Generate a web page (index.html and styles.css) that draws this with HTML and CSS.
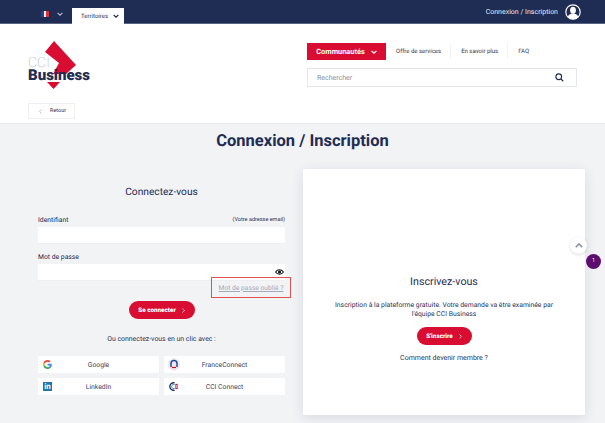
FILE: index.html
```html
<!DOCTYPE html>
<html lang="fr">
<head>
  <meta charset="UTF-8" />
  <meta name="viewport" content="width=device-width, initial-scale=1.0"/>
  <title>Connexion / Inscription</title>
  <link rel="stylesheet" href="styles.css">
</head>
<body>

  <div class="topbar">
    <div class="topbar-left">
      <span class="flag"><i class="flag-blue"></i><i class="flag-white"></i><i class="flag-red"></i></span>
      <svg class="chev chev-lang" viewBox="0 0 10 6"><path d="M1 1l4 4 4-4"/></svg>
      <div class="tab">Territoires
        <svg class="chev" viewBox="0 0 10 6"><path d="M1 1l4 4 4-4"/></svg>
      </div>
    </div>
    <div class="topbar-right">
      <span>Connexion / Inscription</span>
      <svg class="user-icon" viewBox="0 0 16 16">
        <circle cx="8" cy="8" r="7.2" fill="#1f2c53" stroke="#fff" stroke-width="1.2"/>
        <ellipse cx="8" cy="6.2" rx="2.9" ry="3.5" fill="#fff"/>
        <path d="M2.8 13c.5-2.3 2.5-2.7 3.8-3.4h2.8c1.3.7 3.3 1.1 3.8 3.4A7 7 0 0 1 8 15.2 7 7 0 0 1 2.8 13z" fill="#fff"/>
      </svg>
    </div>
  </div>

  <header>
    <div class="header-top">
      <div class="logo">
        <svg class="logo-mark" viewBox="0 0 62 48">
          <path d="M26 0L48 24 38 33H25L31 22 17 11z" fill="#d90d32"/>
          <path d="M19 41H32L25.500 48z" fill="#d90d32"/>
        </svg>
        <span class="logo-cci">CCI</span>
        <span class="logo-business">Business</span>
      </div>
      <div class="header-right">
        <nav class="nav">
          <a class="nav-main">Communautés
            <svg class="chev" viewBox="0 0 10 6"><path d="M1 1l4 4 4-4"/></svg>
          </a>
          <a class="nav-link">Offre de services</a>
          <a class="nav-link">En savoir plus</a>
          <a class="nav-link">FAQ</a>
        </nav>
        <div class="search">
          <span>Rechercher</span>
          <svg class="search-icon" viewBox="0 0 12 12"><circle cx="5" cy="5" r="3.8"/><path d="M8 8l3 3"/></svg>
        </div>
      </div>
    </div>
    <a class="back"><svg class="back-icon" viewBox="0 0 6 10"><path d="M5 1L1 5l4 4"/></svg>Retour</a>
  </header>

  <main>
    <h1>Connexion / Inscription</h1>
    <div class="columns">
      <section class="login">
        <h2>Connectez-vous</h2>
        <div class="label-row"><label>Identifiant</label><small>(Votre adresse email)</small></div>
        <div class="input"></div>
        <div class="label-row label-pass"><label>Mot de passe</label></div>
        <div class="input input-pass">
          <svg class="eye" viewBox="0 0 16 10">
            <path d="M1 5c2-3 4.500-4 7-4s5 1 7 4c-2 3-4.500 4-7 4S3 8 1 5z" fill="none" stroke="#111" stroke-width="1.800"/>
            <circle cx="8" cy="5" r="2.800" fill="#111"/>
          </svg>
        </div>
        <div class="forgot-row"><a class="forgot">Mot de passe oublié ?</a></div>
        <div class="center"><a class="btn btn-login">Se connecter<svg class="btn-chev" viewBox="0 0 6 10"><path d="M1 1l4 4-4 4"/></svg></a></div>
        <p class="oneclick">Ou connectez-vous en un clic avec :</p>
        <div class="social">
          <a class="social-btn">
            <svg class="social-icon" viewBox="0 0 48 48">
              <path fill="#EA4335" d="M24 9.500c3.540 0 6.710 1.220 9.210 3.600l6.850-6.850C35.900 2.380 30.470 0 24 0 14.620 0 6.510 5.380 2.560 13.220l7.980 6.190C12.430 13.720 17.740 9.500 24 9.500z"/>
              <path fill="#4285F4" d="M46.980 24.550c0-1.570-.15-3.090-.38-4.550H24v9.020h12.940c-.58 2.960-2.260 5.480-4.780 7.180l7.730 6c4.510-4.180 7.090-10.360 7.090-17.650z"/>
              <path fill="#FBBC05" d="M10.530 28.590c-.48-1.450-.76-2.990-.76-4.590s.27-3.140.76-4.590l-7.980-6.190C.92 16.460 0 20.120 0 24c0 3.880.92 7.540 2.560 10.780l7.970-6.190z"/>
              <path fill="#34A853" d="M24 48c6.480 0 11.930-2.130 15.890-5.810l-7.730-6c-2.150 1.450-4.920 2.300-8.160 2.300-6.260 0-11.570-4.220-13.470-9.910l-7.980 6.190C6.510 42.620 14.620 48 24 48z"/>
            </svg>
            <span>Google</span>
          </a>
          <a class="social-btn">
            <svg class="social-icon social-icon-fc" viewBox="0 0 12 13">
              <path d="M6 .3l5.300 3v6.400L6 12.700.7 9.700V3.300z" fill="#f3e6ea" stroke="#d9dcec" stroke-width=".5"/>
              <path d="M3 9V5.500A3 3 0 0 1 9 5.500V9" fill="none" stroke="#1f4f9c" stroke-width="1.500"/>
              <path d="M4 9.500h4" stroke="#e1000f" stroke-width="1.200"/>
            </svg>
            <span>FranceConnect</span>
          </a>
          <a class="social-btn">
            <span class="linkedin-icon">in</span>
            <span>LinkedIn</span>
          </a>
          <a class="social-btn">
            <svg class="social-icon" viewBox="0 0 12 12">
              <path d="M7.500 1.200A5 5 0 1 0 7.500 10.800" fill="none" stroke="#1f2c53" stroke-width="1.800"/>
              <path d="M7.500 3.600A2.700 2.700 0 1 0 7.500 8.400" fill="none" stroke="#1f7fb8" stroke-width="1.300"/>
              <path d="M8.500 2.500h3v7h-3z" fill="#d90d32"/>
              <path d="M10 4v4" stroke="#fff" stroke-width=".8"/>
            </svg>
            <span>CCI Connect</span>
          </a>
        </div>
      </section>

      <section class="register">
        <h2>Inscrivez-vous</h2>
        <p>Inscription à la plateforme gratuite. Votre demande va être examinée par l'équipe CCI Business</p>
        <a class="btn btn-register">S'inscrire<svg class="btn-chev" viewBox="0 0 6 10"><path d="M1 1l4 4-4 4"/></svg></a>
        <a class="member">Comment devenir membre ?</a>
      </section>
    </div>
  </main>

  <a class="scroll-top"><svg viewBox="0 0 10 6"><path d="M1 5l4-4 4 4"/></svg></a>
  <span class="notif">1</span>

</body>
</html>
```

FILE: styles.css
```css
html, body {
  height: 423px;
  overflow: hidden;
}
body {
  margin: 0;
  font-family: Roboto, "Liberation Sans", sans-serif;
  background-color: #f2f3f5;
  color: #1f2c53;
  text-rendering: geometricPrecision;
}
a {
  color: inherit;
  text-decoration: none;
}
h1, h2, p {
  margin: 0;
  font-weight: 400;
}
.chev {
  width: 6px;
  height: 4px;
  fill: none;
  stroke: #1f2c53;
  stroke-width: 2;
}

/* top bar */
.topbar {
  height: 23px;
  border-bottom: 1px solid #5a6484;
  background-color: #1f2c53;
  display: flex;
  justify-content: space-between;
  color: #fff;
  font-size: 7px;
}
.topbar-left {
  display: flex;
  align-items: flex-start;
  padding-left: 41px;
}
.flag {
  display: flex;
  width: 8px;
  height: 6px;
  margin-top: 11px;
}
.flag i {
  flex: 1;
}
.flag-blue { background-color: #27408f; }
.flag-white { background-color: #f4f4f4; }
.flag-red { background-color: #e0303c; }
.chev-lang {
  stroke: #aeb4c6;
  margin: 12px 0 0 8px;
}
.tab {
  margin: 8px 0 0 9px;
  width: 52px;
  height: 16px;
  box-sizing: border-box;
  padding: 0 5px 0 9px;
  background-color: #fff;
  color: #1f2c53;
  font-size: 6px;
  display: flex;
  align-items: center;
  justify-content: space-between;
}
.topbar-right {
  display: flex;
  align-items: center;
  gap: 7px;
  padding-right: 24px;
  font-size: 7px;
  color: #e8eaf0;
}
.user-icon {
  width: 16px;
  height: 16px;
}

/* header */
header {
  height: 100px;
  box-sizing: border-box;
  padding: 17px 28px 0;
  background-color: #fff;
  border-bottom: 1px solid #e9eaee;
}
.header-top {
  display: flex;
  height: 62px;
}
.logo {
  position: relative;
  width: 62px;
  height: 48px;
}
.logo-mark {
  width: 62px;
  height: 48px;
}
.logo-cci {
  position: absolute;
  left: 0;
  top: 17px;
  font-size: 14px;
  font-weight: 100;
  line-height: 11px;
  color: #8f94a6;
}
.logo-business {
  position: absolute;
  left: 0;
  top: 28px;
  font-size: 15px;
  font-weight: 900;
  line-height: 13px;
  color: #1f2c53;
}
.header-right {
  margin-left: 217px;
  margin-top: 2px;
}
.nav {
  display: flex;
  align-items: center;
  height: 17px;
}
.nav-main {
  width: 79px;
  height: 17px;
  display: flex;
  align-items: center;
  justify-content: center;
  gap: 6px;
  background-color: #d90d32;
  color: #fff;
  font-size: 7.400px;
  font-weight: 700;
}
.nav-main .chev {
  stroke: #fff;
}
.nav-link {
  padding: 0 9px 0 10px;
  border-right: 1px solid #f1f2f4;
  font-size: 6px;
  line-height: 15px;
  color: #2a3559;
}
.nav-link:last-child {
  border-right: none;
}
.search {
  width: 270px;
  height: 19px;
  box-sizing: border-box;
  margin-top: 8px;
  padding: 0 12px 0 9px;
  border: 1px solid #e6e7eb;
  display: flex;
  align-items: center;
  justify-content: space-between;
  font-size: 7px;
  color: #8a90a3;
}
.search-icon {
  width: 9px;
  height: 9px;
  fill: none;
  stroke: #1f2c53;
  stroke-width: 1.500;
}
.back {
  width: 47px;
  height: 16px;
  box-sizing: border-box;
  padding-left: 10px;
  border: 1px solid #eeeff2;
  display: flex;
  align-items: center;
  gap: 8px;
  font-size: 5.500px;
  color: #2a3559;
}
.back-icon {
  width: 3px;
  height: 5px;
  fill: none;
  stroke: #9a9fb0;
  stroke-width: 1.300;
}

/* main */
h1 {
  padding-top: 8px;
  text-align: center;
  font-size: 16.500px;
  font-weight: 700;
  line-height: 20px;
}
.columns {
  display: flex;
  margin-top: 17px;
  padding-left: 38px;
}
.login {
  width: 247px;
}
.login h2 {
  padding-top: 17px;
  text-align: center;
  font-size: 10.200px;
  line-height: 14px;
}
.label-row {
  display: flex;
  justify-content: space-between;
  align-items: center;
  margin-top: 15px;
  height: 10px;
  font-size: 6.800px;
}
.label-row small {
  font-size: 5.500px;
}
.label-pass {
  margin-top: 8px;
}
.input {
  margin-top: 2px;
  height: 17px;
  background-color: #fff;
  border-bottom: 1px solid #eceef1;
  box-sizing: border-box;
}
.input-pass {
  display: flex;
  justify-content: flex-end;
  align-items: flex-end;
  padding: 0 1px 5px 0;
}
.eye {
  width: 9px;
  height: 6px;
}
.forgot-row {
  display: flex;
  justify-content: flex-end;
  margin: -4px -6px 0 0;
  position: relative;
}
.forgot {
  width: 80px;
  height: 21px;
  box-sizing: border-box;
  border: 1px solid #e2504f;
  display: flex;
  align-items: center;
  justify-content: center;
  font-size: 6.700px;
  color: #a4a9ba;
  text-decoration: underline;
}
.center {
  display: flex;
  justify-content: center;
  margin-top: 3px;
}
.btn {
  display: flex;
  align-items: center;
  justify-content: center;
  gap: 6px;
  height: 18px;
  background-color: #d90d32;
  border-radius: 9px;
  color: #fff;
  font-size: 6.300px;
  font-weight: 900;
}
.btn-login {
  width: 66px;
}
.btn-register {
  width: 55px;
}
.btn-chev {
  width: 3px;
  height: 5px;
  fill: none;
  stroke: #fff;
  stroke-width: 1.500;
}
.oneclick {
  margin-top: 16px;
  text-align: center;
  font-size: 6.900px;
  line-height: 9px;
  color: #2a3559;
}
.social {
  display: grid;
  grid-template-columns: 121px 121px;
  grid-auto-rows: 17px;
  gap: 5px;
  margin-top: 12px;
}
.social-btn {
  position: relative;
  display: flex;
  align-items: center;
  justify-content: center;
  background-color: #fff;
  font-size: 6.800px;
  color: #3a4463;
}
.social-icon {
  position: absolute;
  left: 5px;
  top: 4px;
  width: 9px;
  height: 9px;
}
.social-icon-fc {
  left: 4px;
  top: 2px;
  width: 12px;
  height: 13px;
}
.linkedin-icon {
  position: absolute;
  left: 5px;
  top: 4px;
  width: 9px;
  height: 9px;
  background-color: #1d76b0;
  color: #fff;
  font-size: 8px;
  font-weight: 700;
  line-height: 9px;
  text-align: center;
}

/* register card */
.register {
  width: 282px;
  height: 246px;
  margin-left: 18px;
  background-color: #fff;
  box-shadow: 0 3px 12px rgba(31, 44, 83, 0.12);
  display: flex;
  flex-direction: column;
  align-items: center;
  padding-top: 106px;
  box-sizing: border-box;
}
.register h2 {
  font-size: 10.700px;
  line-height: 14px;
}
.register p {
  width: 235px;
  margin-top: 12px;
  text-align: center;
  font-size: 6.800px;
  line-height: 9px;
  color: #2a3559;
}
.btn-register {
  margin-top: 8px;
}
.member {
  margin-top: 9px;
  font-size: 7px;
  line-height: 9px;
  color: #2a3559;
}

/* floating */
.scroll-top {
  position: fixed;
  left: 570px;
  top: 237px;
  width: 17px;
  height: 17px;
  border-radius: 50%;
  background-color: #fff;
  box-shadow: 0 1px 3px rgba(0, 0, 0, 0.15);
  display: flex;
  align-items: center;
  justify-content: center;
}
.scroll-top svg {
  width: 8px;
  height: 5px;
  fill: none;
  stroke: #8e94a8;
  stroke-width: 2;
}
.notif {
  position: fixed;
  left: 586px;
  top: 254px;
  width: 15px;
  height: 15px;
  border-radius: 50%;
  background-color: #5c0f6e;
  color: #fff;
  font-size: 5.500px;
  line-height: 15px;
  text-align: center;
}
```
